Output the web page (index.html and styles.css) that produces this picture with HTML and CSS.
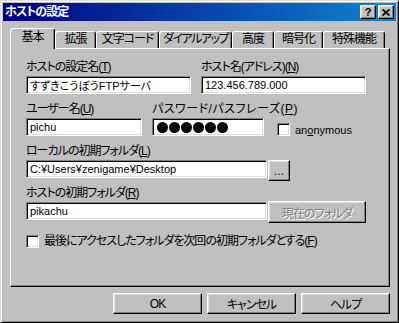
FILE: index.html
```html
<!DOCTYPE html>
<html lang="ja">

<head>
    <meta charset="UTF-8">
    <title>ホストの設定</title>
    <link rel="stylesheet" href="styles.css">
</head>

<body>
    <div class="window">
        <div class="titlebar">
            <span class="title">ホストの設定</span>
            <div class="title-buttons">
                <span class="tbtn help">?</span>
                <span class="tbtn close">
                    <svg width="8" height="7" viewBox="0 0 8 7"><path d="M0.5 0.5 L7.5 6.5 M7.5 0.5 L0.5 6.5" stroke="#000" stroke-width="1.7" fill="none"/></svg>
                </span>
            </div>
        </div>

        <div class="dialog-body">
            <div class="tabs">
                <div class="tab active tab-basic">基本</div>
                <div class="tab tab-ext">拡張</div>
                <div class="tab tab-code">文字コード</div>
                <div class="tab tab-dialup">ダイアルアップ</div>
                <div class="tab tab-adv">高度</div>
                <div class="tab tab-crypt">暗号化</div>
                <div class="tab tab-special">特殊機能</div>
            </div>

            <div class="panel">
                <div class="row first">
                    <div class="field f-name">
                        <label class="label">ホストの設定名(<u>T</u>)</label>
                        <input class="textbox" type="text" value="すずきこうぼうFTPサーバ">
                    </div>
                    <div class="field f-name">
                        <label class="label">ホスト名(アドレス)(<u>N</u>)</label>
                        <input class="textbox" type="text" value="123.456.789.000">
                    </div>
                </div>

                <div class="row">
                    <div class="field f-user">
                        <label class="label">ユーザー名(<u>U</u>)</label>
                        <input class="textbox" type="text" value="pichu">
                    </div>
                    <div class="field f-pass">
                        <label class="label wide">パスワード/パスフレーズ(<u>P</u>)</label>
                        <div class="textbox password">
                            <span class="dot"></span><span class="dot"></span><span class="dot"></span><span class="dot"></span><span class="dot"></span><span class="dot"></span>
                        </div>
                    </div>
                    <div class="check-line anon">
                        <span class="checkbox"></span>
                        <span class="check-text">an<u>o</u>nymous</span>
                    </div>
                </div>

                <div class="row">
                    <div class="field">
                        <label class="label">ローカルの初期フォルダ(<u>L</u>)</label>
                        <div class="line">
                            <input class="textbox folder" type="text" value="C:¥Users¥zenigame¥Desktop">
                            <button class="btn browse">...</button>
                        </div>
                    </div>
                </div>

                <div class="row">
                    <div class="field">
                        <label class="label">ホストの初期フォルダ(<u>R</u>)</label>
                        <div class="line">
                            <input class="textbox folder" type="text" value="pikachu">
                            <button class="btn current" disabled>現在のフォルダ</button>
                        </div>
                    </div>
                </div>

                <div class="check-line last-folder">
                    <span class="checkbox"></span>
                    <span class="check-text">最後にアクセスしたフォルダを次回の初期フォルダとする(<u>F</u>)</span>
                </div>
            </div>

            <div class="actions">
                <button class="btn action">OK</button>
                <button class="btn action">キャンセル</button>
                <button class="btn action">ヘルプ</button>
            </div>
        </div>
    </div>
</body>

</html>
```

FILE: styles.css
```css
* {
    box-sizing: border-box;
}

body {
    margin: 0;
    background-color: #c0c0c0;
    font-family: "Liberation Sans", "Noto Sans CJK JP", sans-serif;
    font-size: 12px;
    font-feature-settings: "palt";
    color: #000;
}

.window {
    width: 399px;
    height: 323px;
    background-color: #c0c0c0;
    border: 1px solid;
    border-color: #dfdfdf #000 #000 #dfdfdf;
    box-shadow: inset 1px 1px #fff, inset -1px -1px #808080;
    padding: 2px;
    display: flex;
    flex-direction: column;
}

.titlebar {
    height: 18px;
    background: linear-gradient(to right, #000080, #1084d0);
    display: flex;
    align-items: center;
    justify-content: space-between;
    padding: 0 2px;
}

.title {
    color: #fff;
    font-weight: bold;
    line-height: 14px;
    letter-spacing: -1px;
}

.title-buttons {
    display: flex;
    gap: 2px;
}

.tbtn {
    width: 16px;
    height: 14px;
    background-color: #c0c0c0;
    border: 1px solid;
    border-color: #fff #000 #000 #fff;
    box-shadow: inset -1px -1px #808080, inset 1px 1px #dfdfdf;
    display: flex;
    align-items: center;
    justify-content: center;
}

.tbtn.help {
    font-weight: bold;
    font-size: 11px;
    line-height: 12px;
}

.dialog-body {
    flex: 1;
    padding: 7px 6px 0 7px;
    display: flex;
    flex-direction: column;
}

.tabs {
    display: flex;
    align-items: flex-end;
    height: 20px;
}

.tab {
    height: 17px;
    border: 1px solid;
    border-bottom: none;
    border-color: #fff #000 transparent #fff;
    border-radius: 3px 3px 0 0;
    box-shadow: inset -1px 0 #808080;
    text-align: center;
    line-height: 14px;
    letter-spacing: -1px;
    white-space: nowrap;
}

.tab.active {
    height: 21px;
    margin-bottom: -1px;
    padding-top: 1px;
    background-color: #c0c0c0;
    position: relative;
    z-index: 1;
}

.tab-basic { width: 45px; }
.tab-ext { width: 41px; }
.tab-code { width: 63px; }
.tab-dialup { width: 73px; letter-spacing: -1.5px; }
.tab-adv { width: 42px; }
.tab-crypt { width: 49px; }
.tab-special { width: 62px; }

.panel {
    height: 239px;
    border: 1px solid;
    border-color: #fff #000 #000 #fff;
    box-shadow: inset -1px -1px #808080;
    padding: 3px 0 0 15px;
}

.row {
    display: flex;
    align-items: flex-end;
    gap: 10px;
    margin-top: 8px;
}

.field {
    display: flex;
    flex-direction: column;
}

.f-name { width: 165px; }
.f-user { width: 116px; }
.f-pass { width: 112px; }

.label {
    display: block;
    line-height: 14px;
    height: 14px;
    margin-bottom: 2px;
    white-space: nowrap;
    letter-spacing: -1px;
}

.label.wide {
    letter-spacing: 0.5px;
}

.textbox {
    width: 100%;
    height: 18px;
    border: 1px solid;
    border-color: #808080 #fff #fff #808080;
    box-shadow: inset 1px 1px #000, inset -1px -1px #dfdfdf;
    background-color: #fff;
    padding: 0 3px;
    margin: 0;
    font: inherit;
    font-size: 11px;
    color: #000;
    outline: none;
    line-height: 16px;
}

.textbox.folder {
    width: 241px;
    flex-shrink: 0;
}

.password {
    display: flex;
    align-items: center;
    gap: 1px;
    padding-left: 4px;
}

.dot {
    width: 11px;
    height: 11px;
    border-radius: 50%;
    background-color: #000;
}

.line {
    display: flex;
    height: 18px;
    gap: 1px;
}

.btn {
    background-color: #c0c0c0;
    border: 1px solid;
    border-color: #fff #000 #000 #fff;
    box-shadow: inset -1px -1px #808080, inset 1px 1px #dfdfdf;
    font: inherit;
    letter-spacing: -1px;
    color: #000;
    padding: 0;
    flex-shrink: 0;
}

.browse {
    width: 22px;
    height: 21px;
    line-height: 14px;
    letter-spacing: 0;
}

.current {
    width: 98px;
    height: 22px;
    margin-top: -1px;
    color: #808080;
    text-shadow: 1px 1px 0 #fff;
}

.check-line {
    display: flex;
    align-items: center;
}

.anon {
    margin-left: 3px;
    height: 13px;
}

.checkbox {
    width: 13px;
    height: 13px;
    border: 1px solid;
    border-color: #808080 #fff #fff #808080;
    box-shadow: inset 1px 1px #000, inset -1px -1px #dfdfdf;
    background-color: #fff;
    flex-shrink: 0;
}

.check-text {
    margin-left: 5px;
    line-height: 14px;
    white-space: nowrap;
    letter-spacing: -1px;
}

.anon .check-text {
    font-size: 11px;
    letter-spacing: 0;
}

.last-folder {
    margin-top: 14px;
}

.actions {
    display: flex;
    justify-content: flex-end;
    gap: 5px;
    margin-top: 6px;
}

.action {
    width: 89px;
    height: 21px;
}
```
